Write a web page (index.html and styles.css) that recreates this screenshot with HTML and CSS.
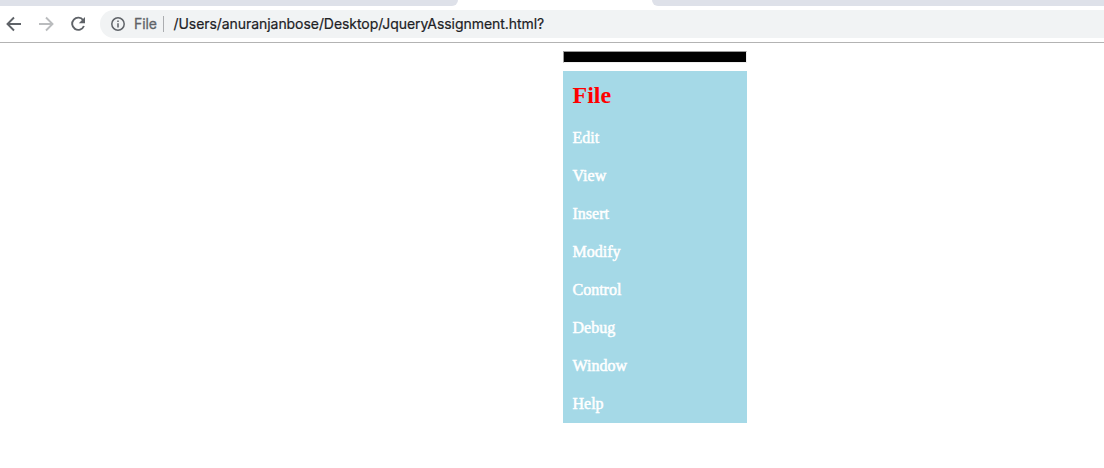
FILE: index.html
```
<!DOCTYPE html>
<html lang="en">
<head>
<meta charset="utf-8">
<title>JqueryAssignment</title>
<link rel="stylesheet" href="styles.css">
</head>
<body>
<header class="browser">
  <div class="tabs"><div class="tab-left"></div><div class="tab-right"></div></div>
  <div class="toolbar">
    <svg class="nav-icon" viewBox="0 0 16 16"><path d="M15 8H2M8 1.5 1.5 8 8 14.5"/></svg>
    <svg class="nav-icon disabled" viewBox="0 0 16 16"><path d="M1 8h13M8 1.5 14.5 8 8 14.5"/></svg>
    <svg class="nav-icon" viewBox="0 0 16 16"><path d="M13.2 4.2A6.1 6.1 0 1 0 13.9 10"/><path class="solid" d="M15 1v6.2H8.8z"/></svg>
    <div class="address">
      <svg class="info" viewBox="0 0 14 14"><circle cx="7" cy="7" r="6.2"/><path d="M7 6.2v4.3M7 3.4v1.5"/></svg>
      <span class="scheme">File</span>
      <span class="divider"></span>
      <span class="url">/Users/anuranjanbose/Desktop/JqueryAssignment.html?</span>
    </div>
  </div>
</header>
<main class="page">
  <hr class="bar">
  <nav class="menu">
    <div class="item active">File</div>
    <div class="item">Edit</div>
    <div class="item">View</div>
    <div class="item">Insert</div>
    <div class="item">Modify</div>
    <div class="item">Control</div>
    <div class="item">Debug</div>
    <div class="item">Window</div>
    <div class="item">Help</div>
  </nav>
</main>
</body>
</html>
```
FILE: styles.css
```
* { box-sizing: border-box; }
body { margin: 0; background: #fff; overflow: hidden; }
.tabs { display: flex; justify-content: space-between; height: 6px; }
.tab-left { width: 458px; background: #dee1e9; border-bottom-right-radius: 6px; }
.tab-right { width: 452px; background: #dee1e9; border-bottom-left-radius: 6px; }
.toolbar {
  display: flex;
  align-items: center;
  gap: 16px;
  height: 37px;
  padding-left: 6px;
  border-bottom: 1px solid #b3b3b3;
}
.nav-icon { width: 16px; height: 16px; flex: none; fill: none; stroke: #5f6368; stroke-width: 1.9; }
.disabled { stroke: #babcbe; }
.solid { fill: #5f6368; stroke: none; }
.address {
  display: flex;
  align-items: center;
  flex: 1;
  height: 28px;
  margin-left: -2px;
  padding-left: 11px;
  background: #f1f3f4;
  border-radius: 14px 0 0 14px;
  font: 14px/28px Inter, sans-serif;
  white-space: nowrap;
}
.info { width: 14px; height: 14px; flex: none; fill: none; stroke: #5f6368; stroke-width: 1.5; }
.scheme { width: 29px; margin-left: 9px; color: #5f6368; letter-spacing: -0.1px; -webkit-text-stroke: 0.3px #5f6368; }
.divider { width: 1px; height: 16px; background: #abadb0; }
.url { margin-left: 9.5px; color: #202124; letter-spacing: -0.06px; -webkit-text-stroke: 0.2px #202124; }
.page { width: 184px; margin: 8px 0 0 563px; font-family: "Liberation Serif", "Times New Roman", serif; }
.bar { height: 12px; margin: 0 0 8px; background: #000; border: 1px solid; border-color: #9a9a9a #eee #eee #9a9a9a; }
.menu { background: #a5d9e7; }
.item { height: 38px; padding: 10px 10px 10px 9.5px; color: #fff; font-size: 16px; line-height: 18px; -webkit-text-stroke: 0.5px #fff; }
.active { height: 48px; color: #f00; font-size: 24px; font-weight: bold; line-height: 28px; -webkit-text-stroke: 0; }
```
